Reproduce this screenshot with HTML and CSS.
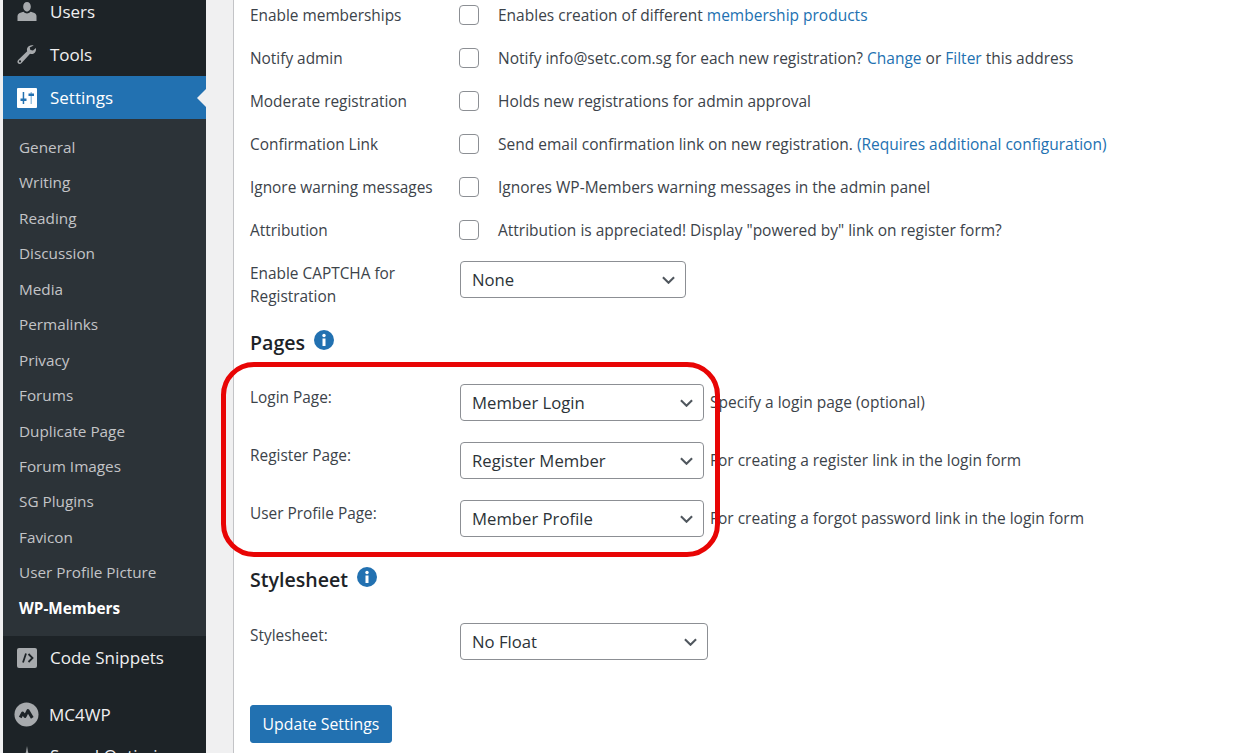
FILE: index.html
```html
<!DOCTYPE html>
<html lang="en">
<head>
<meta charset="utf-8">
<title>WP-Members Settings</title>
<link rel="stylesheet" href="styles.css">
</head>
<body>
<div class="page">
  <nav class="sidebar">
    <a class="menu-item first"><svg class="mi" viewBox="0 0 20 20"><path d="M10 0c2.200 0 3.800 1.900 3.800 4.500S12.200 9.500 10 9.500 6.200 7.100 6.200 4.500 7.800 0 10 0zM6.500 9.800C7.500 11 8.700 11.500 10 11.500s2.500-.5 3.500-1.700c3.500.8 6 2 6 4.200v5H.5v-5c0-2.200 2.500-3.400 6-4.200z"/></svg><span>Users</span></a>
    <a class="menu-item"><svg class="mi" viewBox="0 0 20 20"><path fill-rule="evenodd" d="M16.700.6c-2.600-.8-5.300.1-6.300 2.100-.6 1.200-.6 2.400-.2 3.500L1.400 14.700c-1.200 1.100-1.300 2.600-.4 3.500.9 1 2.500 1 3.600-.1l8.500-9.300c1.200.4 2.500.3 3.700-.4 1.800-1.100 2.600-3.300 2.100-5.500l-2.900 2.700-2.600-.7-.7-2.400zM3 17.500a1.100 1.100 0 1 1 0-2.200 1.100 1.100 0 0 1 0 2.200z"/></svg><span>Tools</span></a>
    <a class="menu-item active"><svg class="mi" viewBox="0 0 20 20"><rect width="20" height="20" rx="1"/><rect class="slider" x="5.700" y="4" width="1.500" height="12"/><rect class="slider" x="3.500" y="10.500" width="6" height="2.500"/><rect class="slider-light" x="13.500" y="4" width="1.500" height="12"/><rect class="slider" x="11.500" y="5.500" width="5.500" height="2.500"/></svg><span>Settings</span></a>
    <ul class="submenu">
      <li>General</li>
      <li>Writing</li>
      <li>Reading</li>
      <li>Discussion</li>
      <li>Media</li>
      <li>Permalinks</li>
      <li>Privacy</li>
      <li>Forums</li>
      <li>Duplicate Page</li>
      <li>Forum Images</li>
      <li>SG Plugins</li>
      <li>Favicon</li>
      <li>User Profile Picture</li>
      <li class="current">WP-Members</li>
    </ul>
    <a class="menu-item snippets"><svg class="mi" viewBox="0 0 20 20"><rect width="20" height="20" rx="2"/><path class="glyph" d="M9 5.500 6 14.500M11.500 6l4 4-4 4"/></svg><span>Code Snippets</span></a>
    <a class="menu-item mc4wp"><svg class="mi big" viewBox="0 0 26 26"><circle cx="13" cy="13" r="12.500"/><path class="mark" d="M6.500 16 9 11.500l2.500 3.500 3-6 4.500 7.500"/></svg><span>MC4WP</span></a>
    <a class="menu-item speed"><svg class="mi" viewBox="0 0 20 20"><path d="M10 0l1 6 5 10H4L9 6z"/></svg><span>Speed Optimizer</span></a>
  </nav>

  <div class="gutter"></div>

  <main class="content">
    <div class="form-row check-row">
      <div class="label">Enable memberships</div>
      <span class="checkbox"></span>
      <div class="desc">Enables creation of different <a>membership products</a></div>
    </div>
    <div class="form-row check-row">
      <div class="label">Notify admin</div>
      <span class="checkbox"></span>
      <div class="desc">Notify info@setc.com.sg for each new registration? <a>Change</a> or <a>Filter</a> this address</div>
    </div>
    <div class="form-row check-row">
      <div class="label">Moderate registration</div>
      <span class="checkbox"></span>
      <div class="desc">Holds new registrations for admin approval</div>
    </div>
    <div class="form-row check-row">
      <div class="label">Confirmation Link</div>
      <span class="checkbox"></span>
      <div class="desc">Send email confirmation link on new registration. <a>(Requires additional configuration)</a></div>
    </div>
    <div class="form-row check-row">
      <div class="label">Ignore warning messages</div>
      <span class="checkbox"></span>
      <div class="desc">Ignores WP-Members warning messages in the admin panel</div>
    </div>
    <div class="form-row check-row">
      <div class="label">Attribution</div>
      <span class="checkbox"></span>
      <div class="desc">Attribution is appreciated! Display "powered by" link on register form?</div>
    </div>
    <div class="form-row captcha-row">
      <div class="label two-line">Enable CAPTCHA for Registration</div>
      <div class="select w226"><span>None</span><svg class="chev" viewBox="0 0 14 8"><path d="M1 1l6 6 6-6"/></svg></div>
    </div>

    <h2 class="heading pages-heading">Pages <svg class="info" viewBox="0 0 20 20"><circle cx="10" cy="10" r="10"/><rect class="i" x="8.500" y="8.500" width="3" height="7.500"/><circle class="i" cx="10" cy="5.500" r="1.700"/></svg></h2>

    <section class="pages-group">
      <div class="form-row page-row">
        <div class="label">Login Page:</div>
        <div class="select w244"><span>Member Login</span><svg class="chev" viewBox="0 0 14 8"><path d="M1 1l6 6 6-6"/></svg></div>
        <div class="desc side">Specify a login page (optional)</div>
      </div>
      <div class="form-row page-row">
        <div class="label">Register Page:</div>
        <div class="select w244"><span>Register Member</span><svg class="chev" viewBox="0 0 14 8"><path d="M1 1l6 6 6-6"/></svg></div>
        <div class="desc side">For creating a register link in the login form</div>
      </div>
      <div class="form-row page-row">
        <div class="label">User Profile Page:</div>
        <div class="select w244"><span>Member Profile</span><svg class="chev" viewBox="0 0 14 8"><path d="M1 1l6 6 6-6"/></svg></div>
        <div class="desc side">For creating a forgot password link in the login form</div>
      </div>
      <div class="highlight"></div>
    </section>

    <h2 class="heading sheet-heading">Stylesheet <svg class="info" viewBox="0 0 20 20"><circle cx="10" cy="10" r="10"/><rect class="i" x="8.500" y="8.500" width="3" height="7.500"/><circle class="i" cx="10" cy="5.500" r="1.700"/></svg></h2>

    <div class="form-row sheet-row">
      <div class="label">Stylesheet:</div>
      <div class="select w248"><span>No Float</span><svg class="chev" viewBox="0 0 14 8"><path d="M1 1l6 6 6-6"/></svg></div>
    </div>

    <button class="primary" type="button">Update Settings</button>
  </main>
</div>
</body>
</html>
```

FILE: styles.css
```css
* { box-sizing: border-box; }
html, body { margin: 0; padding: 0; height: 100%; overflow: hidden; background: #fff; }
body { font-family: "Open Sans", "Noto Sans", sans-serif; font-size: 15px; color: #3c434a; }

.page { display: flex; height: 753px; overflow: hidden; padding-left: 3px; background: #f0f0f1; }

/* Sidebar */
.sidebar { width: 203px; flex: none; background: #1d2327; display: flex; flex-direction: column; }
.menu-item { display: flex; align-items: center; height: 43px; flex: none; color: #f0f0f1; font-size: 17px; position: relative; }
.menu-item.first { margin-top: -10px; }
.menu-item span { margin-left: 13px; }
.mi { width: 20px; height: 20px; margin-left: 14px; flex: none; fill: #a7aaad; }
.mi.big { width: 25px; height: 25px; margin-left: 11px; margin-right: -3px; }
.mi .mark { fill: none; stroke: #1d2327; stroke-width: 3.200; stroke-linejoin: round; }
.mi .glyph { fill: none; stroke: #1d2327; stroke-width: 1.800; }
.menu-item.active { background: #2271b1; color: #fff; }
.menu-item.active .mi { fill: #fff; }
.menu-item.active .mi .slider { fill: #2271b1; }
.menu-item.active .mi .slider-light { fill: #9cc3e0; }
.menu-item.active::after { content: ""; position: absolute; right: 0; top: 50%; margin-top: -9px; border: 9px solid transparent; border-right-color: #f0f0f1; border-left-width: 0; }
.submenu { list-style: none; margin: 0; padding: 11px 0 0; background: #2c3338; flex: none; height: 517px; }
.submenu li { height: 35.450px; line-height: 35.450px; padding-left: 16px; font-size: 15.300px; color: #c3c4c7; white-space: nowrap; }
.submenu li.current { color: #fff; font-weight: 700; }
.mc4wp { margin-top: 14px; }
.speed { margin-top: -2px; }

.gutter { width: 28px; flex: none; background: #f0f0f1; border-right: 1px solid #c3c4c7; }

/* Content */
.content { flex: 1; min-width: 0; background: #fff; padding: 0 0 0 16px; position: relative; }
.form-row { display: flex; align-items: flex-start; }
.label { width: 210px; flex: none; font-size: 15.400px; color: #3c434a; white-space: nowrap; }
.desc { font-size: 15.500px; color: #3c434a; white-space: nowrap; }
.desc a { color: #2271b1; }

.check-row { height: 43px; align-items: center; }
.check-row:first-child { margin-top: -7px; }
.check-row .label { padding-top: 2px; }
.checkbox { width: 20px; height: 20px; flex: none; border: 1px solid #8c8f94; border-radius: 4px; background: #fff; margin: 0 19px 0 -1px; }

.captcha-row { height: 37px; margin-top: 10px; }
.two-line { white-space: normal; line-height: 23px; padding-right: 40px; margin-top: 1px; }

.select { height: 37px; display: flex; align-items: center; justify-content: space-between; padding: 0 10px 0 11px; border: 1px solid #8c8f94; border-radius: 4px; background: #fff; font-size: 16.700px; color: #2c3338; flex: none; }
.w226 { width: 226px; }
.w244 { width: 244px; }
.w248 { width: 248px; }
.chev { width: 13px; height: 8px; fill: none; stroke: #50575e; stroke-width: 2.200; }

.heading { margin: 0; font-size: 19.600px; font-weight: 600; color: #1d2327; display: flex; align-items: flex-start; gap: 9px; line-height: 28px; height: 28px; }
.info { width: 20px; height: 20px; fill: #2271b1; flex: none; margin-top: 1px; }
.info .i { fill: #fff; }
.pages-heading { margin-top: 31px; }

.pages-group { position: relative; margin-top: 27px; height: 182px; }
.page-row { height: 58px; }
.page-row .label { padding-top: 3px; }
.desc.side { margin-left: 6px; padding-top: 7px; }
.highlight { position: absolute; left: -29px; top: -22px; width: 499px; height: 195px; border: 5px solid #e80505; border-radius: 33px; pointer-events: none; }

.sheet-row { margin-top: 29px; height: 37px; }
.sheet-row .label { padding-top: 2px; }

.primary { display: block; margin-top: 45px; width: 142px; height: 38px; padding: 0; font: inherit; font-size: 15.800px; color: #fff; background: #2271b1; border: 1px solid #2271b1; border-radius: 3px; }
```
